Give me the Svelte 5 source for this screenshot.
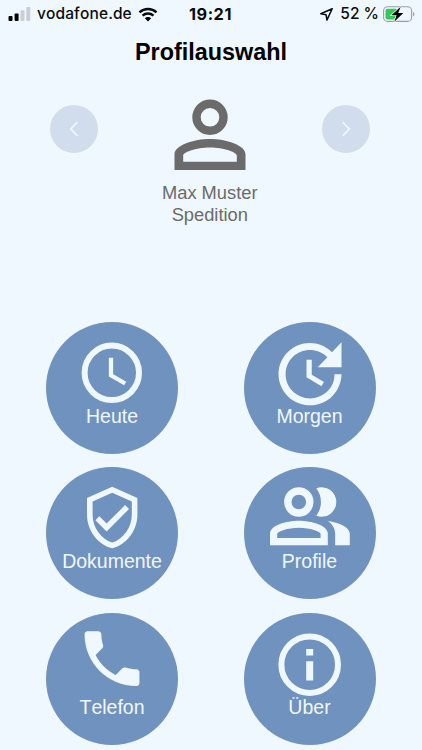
<script lang="ts">
    interface Tile {
        id: string;
        label: string;
    }

    const tiles: Tile[] = [
        { id: "today", label: "Heute" },
        { id: "tomorrow", label: "Morgen" },
        { id: "documents", label: "Dokumente" },
        { id: "profiles", label: "Profile" },
        { id: "phone", label: "Telefon" },
        { id: "about", label: "Über" },
    ];
</script>

<div class="screen">
    <div class="status">
        <div class="carrier">
            <svg class="signal" width="23" height="14" viewBox="0 0 23 14">
                <rect x="0.5" y="9" width="4" height="5" rx="1" />
                <rect x="6.6" y="6.5" width="4" height="7.5" rx="1" />
                <rect class="off" x="12.5" y="3.2" width="4" height="10.8" rx="1" />
                <rect class="off" x="18.3" y="0" width="4" height="14" rx="1" />
            </svg>
            <span class="name">vodafone.de</span>
            <svg width="20" height="15" viewBox="0 0 20 15">
                <path class="arc" d="M1.5 5.4C6.3.9 13.7.9 18.5 5.4M4.5 8.6c3.2-2.9 7.8-2.9 11 0" />
                <path d="M10 14.4l-3.2-3.2c1.8-1.6 4.6-1.6 6.4 0z" />
            </svg>
        </div>
        <span class="time">19:21</span>
        <div class="power">
            <svg width="13" height="13" viewBox="0 0 13 13">
                <path class="location" d="M12.200.8L.8 5.800l5.300 1 .8 5.300z" />
            </svg>
            <span class="percent">52 %</span>
            <svg width="32" height="17" viewBox="0 0 32 17">
                <rect class="case" x="0.6" y="0.8" width="28" height="14.600" rx="4" />
                <rect class="charge" x="2.500" y="2.800" width="12" height="10.600" rx="2" />
                <path class="tip" d="M30 6c1.800.6 1.800 3.800 0 4.400z" />
                <path class="bolt" d="M17.700.8L8.400 9.200h5.200l-2.300 6.600 9-8.900h-5.100z" />
            </svg>
        </div>
    </div>

    <h1>Profilauswahl</h1>

    <div class="picker">
        <button aria-label="Zurück">
            <svg width="48" height="48" viewBox="0 0 48 48">
                <path d="M27.4 17.2L20.8 24l6.6 7" />
            </svg>
        </button>
        <div class="profile">
            <svg width="72" height="72" viewBox="0 0 72 72">
                <circle cx="36" cy="18.3" r="13.5" />
                <path
                    d="M.5 71V55.500C.5 46 20 40 36 40s35.500 6 35.500 15.500V71zM9.200 62.700h53.600v-6.200C62.800 53.500 50 48.600 36 48.600S9.200 53.500 9.200 56.500z"
                />
            </svg>
            <p>Max Muster<br />Spedition</p>
        </div>
        <button aria-label="Weiter">
            <svg width="48" height="48" viewBox="0 0 48 48">
                <path d="M20.600 17.200l6.600 6.800-6.600 7" />
            </svg>
        </button>
    </div>

    <div class="tiles">
        {#each tiles as tile (tile.id)}
            <button class="tile">
                <svg width="132" height="84" viewBox="0 0 132 84">
                    {#if tile.id === "today"}
                        <circle class="line" cx="65.800" cy="50.800" r="27.200" />
                        <path class="hands" d="M65 35.700v17.600l14.200 8.200" />
                    {:else if tile.id === "tomorrow"}
                        <path
                            transform="translate(24 9.800) scale(3.500)"
                            d="M21 10.120h-6.780l2.740-2.820c-2.730-2.700-7.150-2.800-9.880-.1-2.730 2.710-2.730 7.080 0 9.790s7.150 2.710 9.880 0C18.320 15.650 19 14.080 19 12.100h2c0 1.980-.88 4.550-2.640 6.290-3.510 3.480-9.210 3.480-12.720 0-3.500-3.470-3.530-9.110-.02-12.580s9.140-3.470 12.650 0L21 3v7.120zM12.500 8v4.250l3.500 2.080-.72 1.210L11 13V8h1.500z"
                        />
                    {:else if tile.id === "documents"}
                        <path
                            transform="translate(32.600 16.900) scale(2.800)"
                            d="M12 1L3 5v6c0 5.550 3.840 10.740 9 12 5.160-1.260 9-6.450 9-12V5l-9-4zm7 10c0 4.520-2.980 8.690-7 9.930-4.020-1.240-7-5.410-7-9.930V6.300l7-3.110 7 3.110V11zm-11.590.590L6 13l4 4 8-8-1.410-1.420L10 14.170z"
                        />
                    {:else if tile.id === "profiles"}
                        <circle class="head" cx="54.800" cy="35" r="11" />
                        <path
                            d="M26 78.300V66.500C26 58.500 42 53.700 54.900 53.700s28.900 4.800 28.900 12.800v11.800zM33.200 71h43.400v-4.200c0-2.300-10.400-6.100-21.700-6.100s-21.700 3.800-21.700 6.100z"
                        />
                        <path d="M72.300 21.300a14.700 14.700 0 1 1 0 27.400c6.200-8.200 6.200-19.200 0-27.400z" />
                        <path d="M84 54c11 1.500 21.800 6 21.800 13v11.300H91.200V67c0-5.500-3-9.800-7.200-13z" />
                    {:else if tile.id === "phone"}
                        <path
                            transform="translate(29.400 9) scale(3.050)"
                            d="M6.620 10.790c1.440 2.830 3.760 5.140 6.590 6.590l2.200-2.200c.27-.27.67-.36 1.020-.24 1.120.37 2.330.57 3.570.57.55 0 1 .45 1 1V20c0 .55-.45 1-1 1-9.390 0-17-7.610-17-17 0-.55.45-1 1-1h3.500c.55 0 1 .45 1 1 0 1.250.2 2.450.57 3.570.11.35.03.74-.25 1.020l-2.200 2.200z"
                        />
                    {:else}
                        <circle class="line" cx="65.700" cy="51.700" r="28.300" />
                        <path d="M62.200 36h7v6.400h-7zM62.200 48.200h7v19.300h-7z" />
                    {/if}
                </svg>
                <span>{tile.label}</span>
            </button>
        {/each}
    </div>
</div>

<style>
    :global(body) {
        background: #f0f8ff;
        overflow: hidden;
    }

    .screen {
        width: 422px;
        height: 750px;
        overflow: hidden;
        box-sizing: border-box;
        background: #f0f8ff;
        font-family: "Liberation Sans", Arial, sans-serif;
        font-kerning: none;
    }

    svg {
        display: block;
        flex: none;
    }

    .status {
        display: grid;
        grid-template-columns: 1fr auto 1fr;
        align-items: center;
        height: 28px;
        padding: 0 7px 0 8px;
        font-family: Inter, sans-serif;
        font-size: 15.5px;
        font-weight: 500;
        line-height: 28px;
        color: #0b0c0e;
        white-space: nowrap;
    }

    .carrier,
    .power {
        display: flex;
        align-items: center;
    }

    .carrier {
        gap: 6px;
    }

    .signal .off {
        fill: #c8ced6;
    }

    .name {
        width: 95px;
        letter-spacing: 0.1px;
    }

    .arc {
        fill: none;
        stroke: #0b0c0e;
        stroke-width: 2.4;
    }

    .time {
        margin-right: 2px;
        font-size: 16.3px;
        font-weight: 700;
        letter-spacing: 0.5px;
    }

    .power {
        justify-content: flex-end;
        gap: 4px;
    }

    .percent {
        margin-left: 3px;
    }

    .location {
        fill: none;
        stroke: #0b0c0e;
        stroke-width: 1.5;
        stroke-linejoin: round;
    }

    .case {
        fill: none;
        stroke: #999fa5;
        stroke-width: 1.1;
    }

    .charge {
        fill: #35c759;
    }

    .tip {
        fill: #999fa5;
    }

    .bolt {
        stroke: #f0f8ff;
        stroke-width: 1.5;
        paint-order: stroke;
    }

    h1 {
        margin: 0;
        height: 48px;
        line-height: 48px;
        text-align: center;
        font-size: 23.4px;
        color: #000;
    }

    .picker {
        display: flex;
        justify-content: space-between;
        height: 246px;
        box-sizing: border-box;
        padding: 23px 52.5px 0 50px;
    }

    button {
        border: 0;
        padding: 0;
        border-radius: 50%;
        font-family: inherit;
        font-kerning: inherit;
    }

    .picker button {
        width: 48px;
        height: 48px;
        margin-top: 6px;
        background: #d1ddec;
    }

    .picker button path {
        fill: none;
        stroke: #f0f8ff;
        stroke-width: 1.7;
    }

    .profile {
        display: flex;
        flex-direction: column;
        align-items: center;
    }

    .profile circle {
        fill: none;
        stroke: #6b6b6b;
        stroke-width: 8.4;
    }

    .profile path {
        fill: #6b6b6b;
        fill-rule: evenodd;
    }

    .profile p {
        margin: 11px 0 0;
        text-align: center;
        font-size: 18.3px;
        line-height: 22px;
        color: #6b6b6b;
    }

    .tiles {
        display: grid;
        grid-template-columns: 132px 132px;
        column-gap: 65.5px;
        row-gap: 13.3px;
        margin-left: 46px;
    }

    .tile {
        width: 132px;
        height: 132px;
        display: flex;
        flex-direction: column;
        align-items: center;
        background: #7092be;
        color: #f0f8ff;
        font-size: 19.5px;
        line-height: 20px;
    }

    .tile svg {
        fill: #f0f8ff;
        fill-rule: evenodd;
    }

    .tile .line,
    .tile .hands,
    .tile .head {
        fill: none;
        stroke: #f0f8ff;
        stroke-width: 6;
    }

    .tile .hands {
        stroke-width: 4.3;
    }

    .tile .head {
        stroke-width: 7.4;
    }
</style>
